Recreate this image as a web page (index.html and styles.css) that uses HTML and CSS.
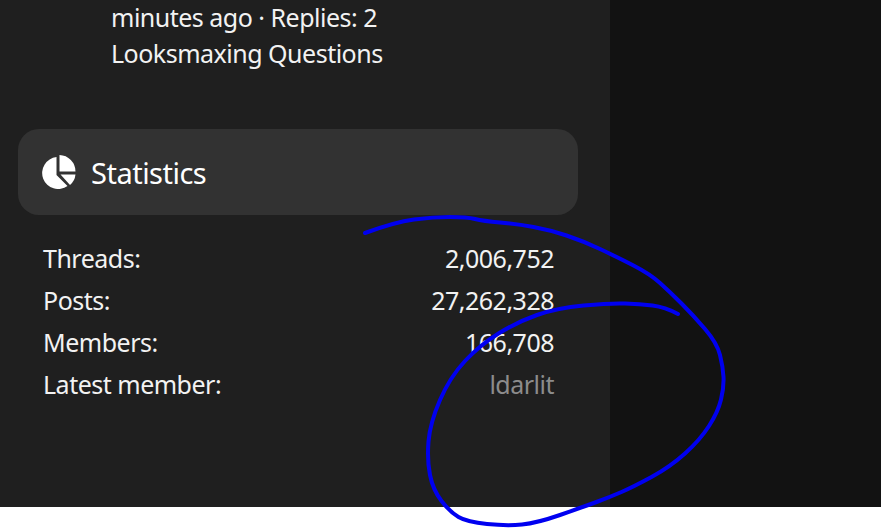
FILE: index.html
```html
<!DOCTYPE html>
<html lang="en">
<head>
<meta charset="utf-8">
<title>Statistics</title>
<link rel="stylesheet" href="styles.css">
</head>
<body>
<div class="page">
  <aside class="sidebar">
    <div class="recent">
      <div>minutes ago · Replies: 2</div>
      <div>Looksmaxing Questions</div>
    </div>
    <section class="block">
      <h3 class="block-head">
        <svg class="pie" viewBox="0 0 34 34" aria-hidden="true">
          <path d="M14.5 2.1V20L25.5 31A16 16 0 1 1 14.5 2.1Z"/>
          <path d="M17.5 0A16.5 16.5 0 0 1 33.5 16.5H17.5Z"/>
          <path d="M18.5 19.5H33.5A16 16 0 0 1 28 30Z"/>
        </svg>
        <span>Statistics</span>
      </h3>
      <dl class="stats">
        <div class="row"><dt>Threads:</dt><dd>2,006,752</dd></div>
        <div class="row"><dt>Posts:</dt><dd>27,262,328</dd></div>
        <div class="row"><dt>Members:</dt><dd>166,708</dd></div>
        <div class="row"><dt>Latest member:</dt><dd class="muted">ldarlit</dd></div>
      </dl>
    </section>
  </aside>
</div>
<svg class="scribble" viewBox="0 0 881 528" aria-hidden="true">
  <path d="M365 233Q395 222 414 219.5Q433 217 450 217Q467 217 475 219Q483 221 500 222.5Q517 224 533.5 227Q550 230 566.5 235.5Q583 241 600 249Q617 257 633.5 265.5Q650 274 660 283Q670 292 681.5 303.5Q693 315 705 329Q717 343 720 355Q723 367 723.5 377Q724 387 721 399.5Q718 412 709 426Q700 440 685 453.5Q670 467 651.5 477Q633 487 621.5 492Q610 497 596.5 502Q583 507 560 515Q537 523 522 524.5Q507 526 487 524Q467 522 458.5 517Q450 512 441.5 501Q433 490 430 475Q427 460 428.5 441.5Q430 423 440 400Q450 377 465 361Q480 345 498.5 333.5Q517 322 537 315Q557 308 583.5 305.5Q610 303 625 303.5Q640 304 652.5 305.5Q665 307 678 314"/>
</svg>
</body>
</html>
```

FILE: styles.css
```css
* { box-sizing: border-box; }
html, body { margin: 0; padding: 0; background: #fff; overflow: hidden; }
body { height: 528px; position: relative; font-family: "Noto Sans", "Open Sans", sans-serif; color: #f2f2f2; }
.page { height: 507px; background: #121212; display: flex; }
.sidebar { width: 610px; background: #1f1f1f; padding: 0 32px 0 18px; }
.recent { padding: 0 0 0 93px; height: 130px; font-size: 25px; line-height: 36px; letter-spacing: -0.5px; white-space: nowrap; margin-top: -1px; padding-top: 0; }
.block { display: block; }
.block-head { margin: 0; height: 86px; background: #323232; border-radius: 21px; display: flex; align-items: center; gap: 15px; padding: 0 24px; font-size: 29px; font-weight: 400; letter-spacing: -0.5px; color: #fff; }
.pie { width: 34px; height: 34px; fill: #fff; flex: none; }
.stats { margin: 22px 0 0; padding: 0 24px 0 25px; font-size: 25px; line-height: 42px; letter-spacing: -0.5px; }
.row { display: flex; justify-content: space-between; }
.row dd { margin: 0; }
.row .muted { color: #8c8c8c; }
.scribble { position: absolute; left: 0; top: 0; width: 881px; height: 528px; fill: none; stroke: #0000f0; stroke-width: 4; stroke-linecap: round; stroke-linejoin: round; pointer-events: none; }
```
